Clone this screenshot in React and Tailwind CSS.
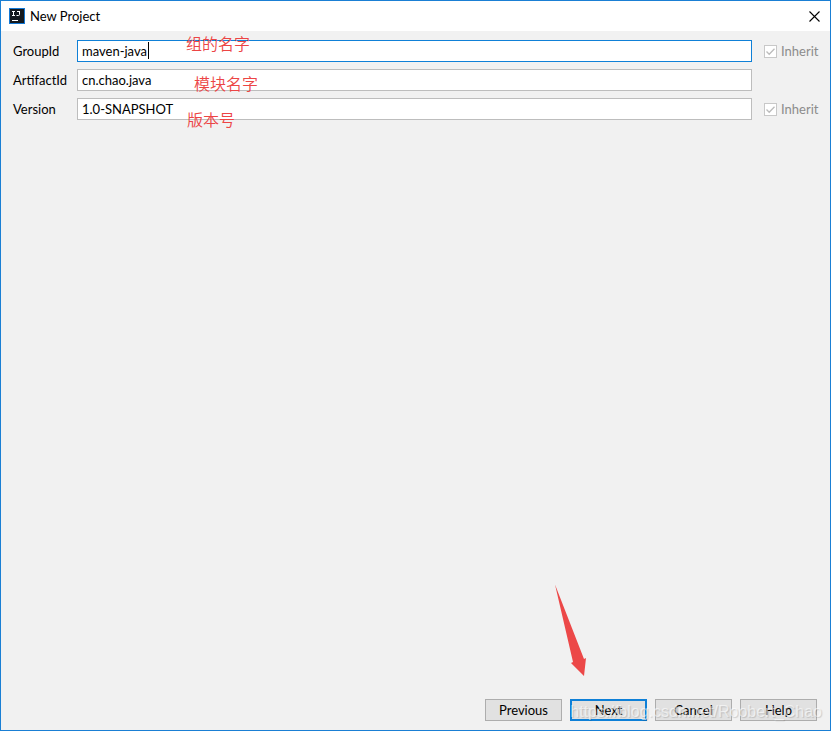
import React, { useState } from "react";

const initialFields = [
  { id: "groupId", label: "GroupId", value: "maven-java", inherit: true, active: true },
  { id: "artifactId", label: "ArtifactId", value: "cn.chao.java" },
  { id: "version", label: "Version", value: "1.0-SNAPSHOT", inherit: true },
];

function AppIcon() {
  return (
    <svg width="16" height="16" viewBox="0 0 16 16" fill="none" aria-hidden="true">
      <rect width="16" height="16" fill="#1478d4" />
      <rect x="1" y="1" width="14" height="14" fill="#14191e" />
      <path d="M3 3.5h3M4.5 3.5v4M3 7.5h3" stroke="#fff" />
      <path d="M8 3.5h3M10.5 3.5v3q0 1-1 1H7.5" stroke="#fff" />
      <path d="M3 12.5h6" stroke="#fff" />
    </svg>
  );
}

function TitleBar() {
  return (
    <header className="flex h-[30px] items-center bg-white pl-2 pr-2.5">
      <AppIcon />
      <h1 className="ml-[5px] flex-1">New Project</h1>
      <button type="button" aria-label="Close">
        <svg width="11" height="11" viewBox="0 0 11 11" stroke="#000" strokeWidth="1.1">
          <path d="M0.5 0.5l10 10M10.5 0.5l-10 10" />
        </svg>
      </button>
    </header>
  );
}

function InheritBox({ id }) {
  return (
    <label htmlFor={id} className="flex items-center gap-1 text-[#8c8c8c]">
      <span className="relative block size-[13px]">
        <input
          id={id}
          type="checkbox"
          defaultChecked
          disabled
          className="block size-[13px] appearance-none border border-[#c8c8c8] bg-white"
        />
        <svg className="absolute inset-0" width="13" height="13" viewBox="0 0 13 13" fill="none">
          <path d="M2.5 6.5l2.7 2.8 5.3-5.6" stroke="#bcbcbc" strokeWidth="1.3" />
        </svg>
      </span>
      Inherit
    </label>
  );
}

function Field({ field, onChange }) {
  return (
    <div className="flex h-[22px] items-center">
      <label htmlFor={field.id} className="w-16 shrink-0">
        {field.label}
      </label>
      <div className="relative flex-1">
        <input
          id={field.id}
          type="text"
          value={field.value}
          onChange={(e) => onChange(field.id, e.target.value)}
          className={`block h-[22px] w-full border bg-white px-1 outline-none ${
            field.active ? "border-[#0f80d7]" : "border-[#bdbdbd]"
          }`}
        />
        {field.active && (
          <span className="absolute left-[71px] top-[2px] h-[17px] w-px bg-black"></span>
        )}
      </div>
      <div className="ml-3 w-[54px] shrink-0">
        {field.inherit && <InheritBox id={`${field.id}-inherit`} />}
      </div>
    </div>
  );
}

function DialogButton({ children, primary }) {
  return (
    <button
      type="button"
      className={`flex h-[22px] w-[77px] items-center justify-center bg-[#e1e1e1] ${
        primary ? "border-2 border-[#0f80d7]" : "border border-[#adadad]"
      }`}
    >
      {children}
    </button>
  );
}

// Red notes and the arrow drawn on top of the form
function Annotations() {
  return (
    <div className="pointer-events-none font-['Noto_Sans_CJK_SC',sans-serif] text-base leading-5 font-[350] text-[#ec4545]">
      <span className="absolute left-[185px] top-8">组的名字</span>
      <span className="absolute left-[193px] top-[72px]">模块名字</span>
      <span className="absolute left-[186px] top-[108px]">版本号</span>
      <svg
        className="absolute bottom-[54px] right-[243px]"
        width="33"
        height="92"
        viewBox="0 0 33 92"
        fill="#ec4848"
      >
        <path d="M1 0.5L30 75L32 74L30 92L17 79L19 78Z" />
      </svg>
    </div>
  );
}

export default function App() {
  const [fields, setFields] = useState(initialFields);

  const handleChange = (id, value) => {
    setFields((prev) => prev.map((f) => (f.id === id ? { ...f, value } : f)));
  };

  return (
    <div className="relative flex min-h-screen flex-col border border-[#1a7fd4] bg-[#f1f1f1] font-['Lato','Noto_Sans_CJK_SC',sans-serif] text-[13px] leading-5 text-black">
      <TitleBar />
      <main className="flex flex-1 flex-col gap-[7px] pt-[9px] pr-3 pl-3">
        {fields.map((field) => (
          <Field key={field.id} field={field} onChange={handleChange} />
        ))}
      </main>
      <footer className="flex justify-end gap-2 pr-[13px] pb-[9px]">
        <DialogButton>Previous</DialogButton>
        <DialogButton primary>Next</DialogButton>
        <DialogButton>Cancel</DialogButton>
        <DialogButton>Help</DialogButton>
      </footer>
      <Annotations />
      <span className="pointer-events-none absolute right-2 bottom-2 font-['Liberation_Sans',sans-serif] text-base leading-5 text-white/60 text-shadow-[1px_1px_1px_rgb(0_0_0/0.15)]">
        https://blog.csdn.net/Roobert_Chao
      </span>
    </div>
  );
}
